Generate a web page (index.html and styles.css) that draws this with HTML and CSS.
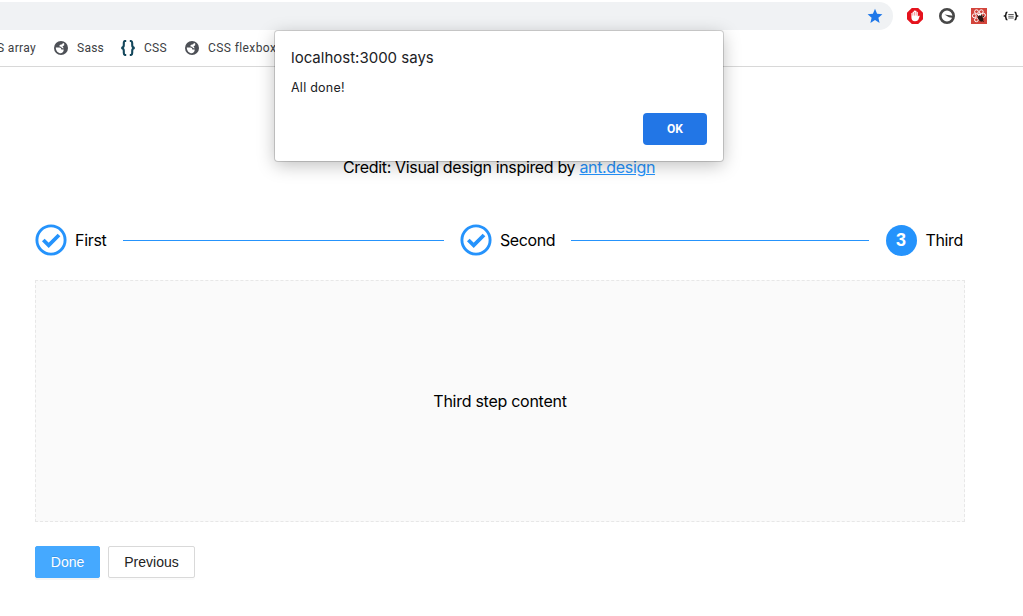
FILE: index.html
```html
<!DOCTYPE html>
<html lang="en">
<head>
<meta charset="utf-8">
<title>Steps</title>
<link rel="stylesheet" href="styles.css">
</head>
<body>
<svg width="0" height="0" class="defs">
  <symbol id="globe" viewBox="0 0 14 14">
    <circle cx="7" cy="7" r="7" fill="#4d5056"/>
    <path d="M1.8 6.5h3.6c1.3 0 1.9.8 1.9 2h2.4c0 2-1 3.5-2.8 3.8-2.9 0-5.1-2.5-5.1-5.8z" fill="#fff"/>
    <path d="M8.9 1.9c-.3 1.2-1 1.7-2.2 1.7L5.2 4.7c.2.8.9 1 1.9 1 .6 1.2 1.4 1.7 2.7 1.6L8.5 5.4l1.7-1.1V2.5z" fill="#fff"/>
  </symbol>
  <symbol id="check" viewBox="0 0 32 32">
    <circle cx="16" cy="16" r="14.1" fill="none" stroke="#2593fc" stroke-width="2.9"/>
    <path d="M8.3 16l5.4 5.3L24 11" fill="none" stroke="#2593fc" stroke-width="3.8"/>
  </symbol>
</svg>
<header class="browser">
  <div class="toolbar">
    <div class="omnibox">
      <svg class="star" viewBox="0 0 16 16"><path d="M8 .8l2.1 4.9 5.3.5-4 3.5 1.2 5.2L8 12.1l-4.6 2.8 1.2-5.2-4-3.5 5.3-.5z" fill="#1f78e9"/></svg>
    </div>
    <div class="extensions">
      <svg viewBox="0 0 16 16"><path d="M4.8 0h6.4L16 4.8v6.4L11.2 16H4.8L0 11.2V4.8z" fill="#e5131d"/><path d="M4.4 5v4.2c0 2.6 1.2 4.1 3.6 4.1s3.4-1.4 3.9-3.1l.8-2.3-.7-.4-1.2.9V4.2l-.6-.4-.7.4V3l-.6-.4-.7.4v-.2l-.6-.4-.7.4v1.3l-.7-.5-.6.5v1z" fill="#fff"/><path d="M5.8 5v2.6M7.5 4v3.6M9.2 4v3.6" stroke="#e5131d" stroke-width=".4"/></svg>
      <svg viewBox="0 0 16 16"><circle cx="8" cy="8" r="6.7" fill="#fff" stroke="#474747" stroke-width="2.6"/><path d="M5.5 6.4l8.5 1.3v2.2L10 9.3z" fill="#474747"/></svg>
      <svg viewBox="0 0 16 16"><path d="M0 0h16v16H0z" fill="#d3453c"/><g fill="none" stroke="#fff" stroke-width="1"><circle cx="5.5" cy="3.7" r="1.9"/><circle cx="10.3" cy="3.7" r="1.9"/><circle cx="3.3" cy="7.8" r="1.9"/><circle cx="12.5" cy="7.2" r="1.9"/><circle cx="5.4" cy="11.8" r="1.9"/></g><path d="M6 6.4l2-1.2 2 .8 1 2-3 1z" fill="#fff"/><ellipse cx="9.6" cy="10.5" rx="2.2" ry="3.5" fill="#281713" transform="rotate(-35 9.6 10.5)"/><path d="M6.4 7.4l2 2M10.5 6.5l.2 3M11 9l2.2-.8M11 12l1.6 1.8" stroke="#281713"/></svg>
      <svg viewBox="0 0 16 16"><path d="M4.4 4.2c-1.4 0-1.4.6-1.4 1.5 0 1.2 0 1.8-1.1 2.3 1.1.5 1.1 1.1 1.1 2.3 0 .9 0 1.5 1.4 1.5M11.6 4.2c1.4 0 1.4.6 1.4 1.5 0 1.2 0 1.8 1.1 2.3-1.1.5-1.1 1.1-1.1 2.3 0 .9 0 1.5-1.4 1.5" fill="none" stroke="#111" stroke-width="1.5"/><path d="M5.3 6.5h5.4M5.3 8.3h5.4M5.3 10h5.4" stroke="#333" stroke-width=".8"/></svg>
    </div>
  </div>
  <nav class="bookmarks">
    <span class="bookmark array">S array</span>
    <span class="bookmark sass"><svg><use href="#globe"/></svg>Sass</span>
    <span class="bookmark css"><svg class="braces" viewBox="0 0 16 16"><path d="M6.2 1H5.4C4.1 1 3.8 1.7 3.8 3v2.3C3.8 7 3 7.7 1.4 8c1.6.3 2.4 1 2.4 2.7V13c0 1.3.3 2 1.6 2h.8M9.8 1h.8c1.3 0 1.6.7 1.6 2v2.3c0 1.7.8 2.4 2.4 2.7-1.6.3-2.4 1-2.4 2.7V13c0 1.3-.3 2-1.6 2h-.8" fill="none" stroke="#13465b" stroke-width="2.1"/></svg>CSS</span>
    <span class="bookmark flexbox"><svg><use href="#globe"/></svg>CSS flexbox</span>
  </nav>
</header>
<main class="page">
  <p class="credit">Credit: Visual design inspired by <a href="#">ant.design</a></p>
  <div class="steps">
    <div class="step first"><svg class="mark"><use href="#check"/></svg><span class="label">First</span><i class="line"></i></div>
    <div class="step second"><svg class="mark"><use href="#check"/></svg><span class="label">Second</span><i class="line"></i></div>
    <div class="step third"><span class="mark number">3</span><span class="label">Third</span></div>
  </div>
  <section class="content"><span class="content-text">Third step content</span></section>
  <div class="actions"><button class="button primary">Done</button><button class="button">Previous</button></div>
</main>
<div class="dialog" role="alertdialog">
  <div class="dialog-title"><span>localhost:3000 says</span></div>
  <div class="dialog-message"><span>All done!</span></div>
  <button class="ok">OK</button>
</div>
</body>
</html>
```
FILE: styles.css
```css
* { box-sizing: border-box; }
body { margin: 0; height: 616px; overflow: hidden; background: #fff; font-family: Inter, "Liberation Sans", sans-serif; color: #000; }
.defs { position: absolute; }
.browser { height: 67px; padding-top: 2px; border-bottom: 1px solid #d8d8d8; overflow: hidden; }
.toolbar { display: flex; height: 28px; }
.omnibox { width: 893px; flex: none; background: #f0f2f4; border-radius: 0 14px 14px 0; display: flex; justify-content: flex-end; align-items: center; padding-right: 10px; }
.star { width: 16px; height: 16px; }
.extensions { display: flex; align-items: center; gap: 16px; padding-left: 14px; }
.extensions svg { width: 16px; height: 16px; flex: none; }
.bookmarks { display: flex; height: 36px; align-items: center; font-family: Roboto, sans-serif; font-size: 12px; color: #3c4043; white-space: nowrap; }
.bookmark { display: flex; align-items: center; flex: none; letter-spacing: .25px; }
.bookmark svg { width: 14px; height: 14px; margin-right: 9px; }
.bookmark .braces { width: 16px; height: 16px; margin-right: 8px; }
.array { width: 54px; margin-left: -3px; letter-spacing: .35px; }
.sass { width: 66px; margin-left: 3px; }
.css { width: 65px; }
.flexbox { letter-spacing: .4px; }
.page { padding: 90px 58px 0 35px; }
.credit { margin: 0; padding-left: 308px; font-size: 16px; line-height: 20px; letter-spacing: -.34px; white-space: nowrap; }
.credit a { color: #2593fc; }
.steps { display: flex; height: 32px; margin-top: 47px; }
.step { display: flex; align-items: center; }
.mark { width: 32px; height: 32px; margin-right: 8px; flex: none; }
.label { font-size: 16px; letter-spacing: -.3px; white-space: nowrap; }
.line { flex: 1; height: 1px; background: #2593fc; margin: 0 16px; }
.first { width: 425px; }
.second { width: 425px; }
.second .label { letter-spacing: -.4px; }
.third { padding-left: .6px; }
.number { width: 31px; height: 31px; margin-right: 8.9px; display: flex; align-items: center; justify-content: center; background: #2593fc; color: #fff; border-radius: 50%; font: bold 18px "Liberation Sans", sans-serif; }
.third .label { letter-spacing: -.35px; }
.content { height: 242px; margin-top: 24px; border: 1px dashed #e7e7e7; background: #fafafa; display: flex; align-items: center; justify-content: center; font-size: 16px; letter-spacing: -.27px; }
.actions { display: flex; gap: 8px; margin-top: 24px; }
.button { height: 32px; width: 87px; padding: 0; border: 1px solid #d9d9d9; border-radius: 2px; background: #fff; color: #222; font: 14px "Liberation Sans", sans-serif; box-shadow: 0 2px 0 rgba(0,0,0,.015); }
.primary { width: 65px; border-color: #45a9ff; background: #45a9ff; color: #fff; text-shadow: 0 -1px 0 rgba(0,0,0,.12); box-shadow: 0 2px 0 rgba(0,0,0,.045); }
.dialog { position: absolute; left: 275px; top: 31px; width: 448px; height: 130px; padding: 16px; display: flex; flex-direction: column; background: #fff; border-radius: 3px; box-shadow: 0 0 0 1px rgba(0,0,0,.16), 0 4px 18px rgba(0,0,0,.26); }
.dialog-title { font: 15px/22px Inter, sans-serif; color: #202124; }
.dialog-message { margin-top: 9px; font: 12.5px/20px Inter, sans-serif; letter-spacing: .25px; color: #202124; }
.ok { align-self: flex-end; margin-top: 15px; width: 64px; height: 32px; flex: none; padding: 0; border: 0; border-radius: 4px; background: #2276e6; color: #fff; font: bold 12px Roboto, sans-serif; }
```
